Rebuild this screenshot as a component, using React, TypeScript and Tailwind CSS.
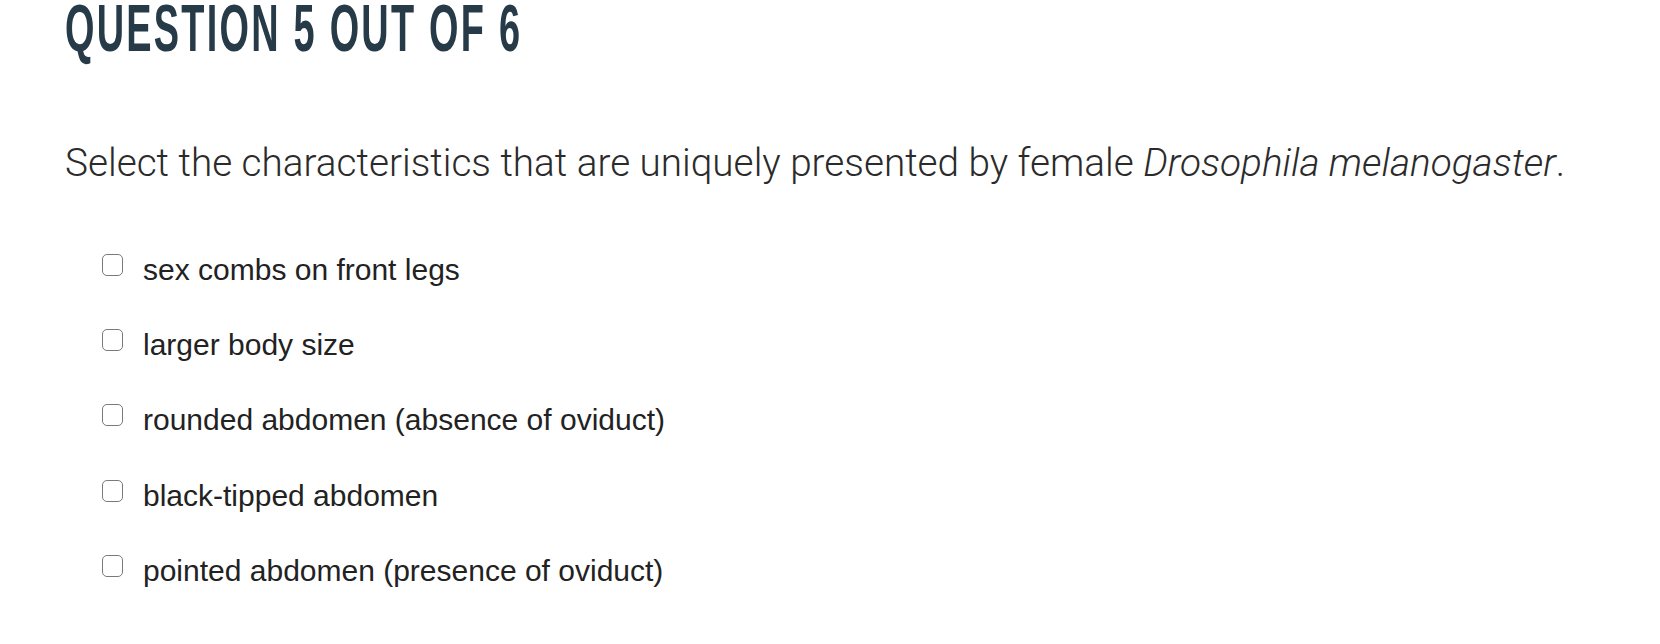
import React from 'react';

const options = [
  'sex combs on front legs',
  'larger body size',
  'rounded abdomen (absence of oviduct)',
  'black-tipped abdomen',
  'pointed abdomen (presence of oviduct)',
];

const App: React.FC = () => {
  return (
    <div className="w-[1660px] h-[644px] overflow-hidden bg-white pl-[65px]">
      {/* Title */}
      <h1
        className="mt-[-6px] h-[67px] inline-block origin-left scale-x-[0.565] whitespace-nowrap text-[67px] leading-[67px] tracking-[4px] font-bold text-[#263a47]"
        style={{ fontFamily: '"Liberation Sans", Arial, sans-serif' }}
      >
        QUESTION 5 OUT OF 6
      </h1>

      {/* Prompt */}
      <p
        className="mt-[78px] text-[38.7px] leading-[48px] font-light text-[#2b2b2b] whitespace-nowrap"
        style={{ fontFamily: 'Roboto, "Liberation Sans", sans-serif' }}
      >
        Select the characteristics that are uniquely presented by female <em>Drosophila melanogaster</em>.
      </p>

      {/* Options */}
      <ul className="mt-[66px] pl-[37px] flex flex-col">
        {options.map((opt) => (
          <li key={opt} className="h-[75.2px] flex items-start gap-[20px]">
            <span className="mt-[1px] w-[21px] h-[22px] rounded-[5px] border-[1.5px] border-[#7a7a7a] bg-white shrink-0" />
            <span
              className="text-[30px] leading-[34px] text-[#222222] whitespace-nowrap"
              style={{ fontFamily: '"Liberation Sans", Arial, sans-serif' }}
            >
              {opt}
            </span>
          </li>
        ))}
      </ul>
    </div>
  );
};

export default App;
